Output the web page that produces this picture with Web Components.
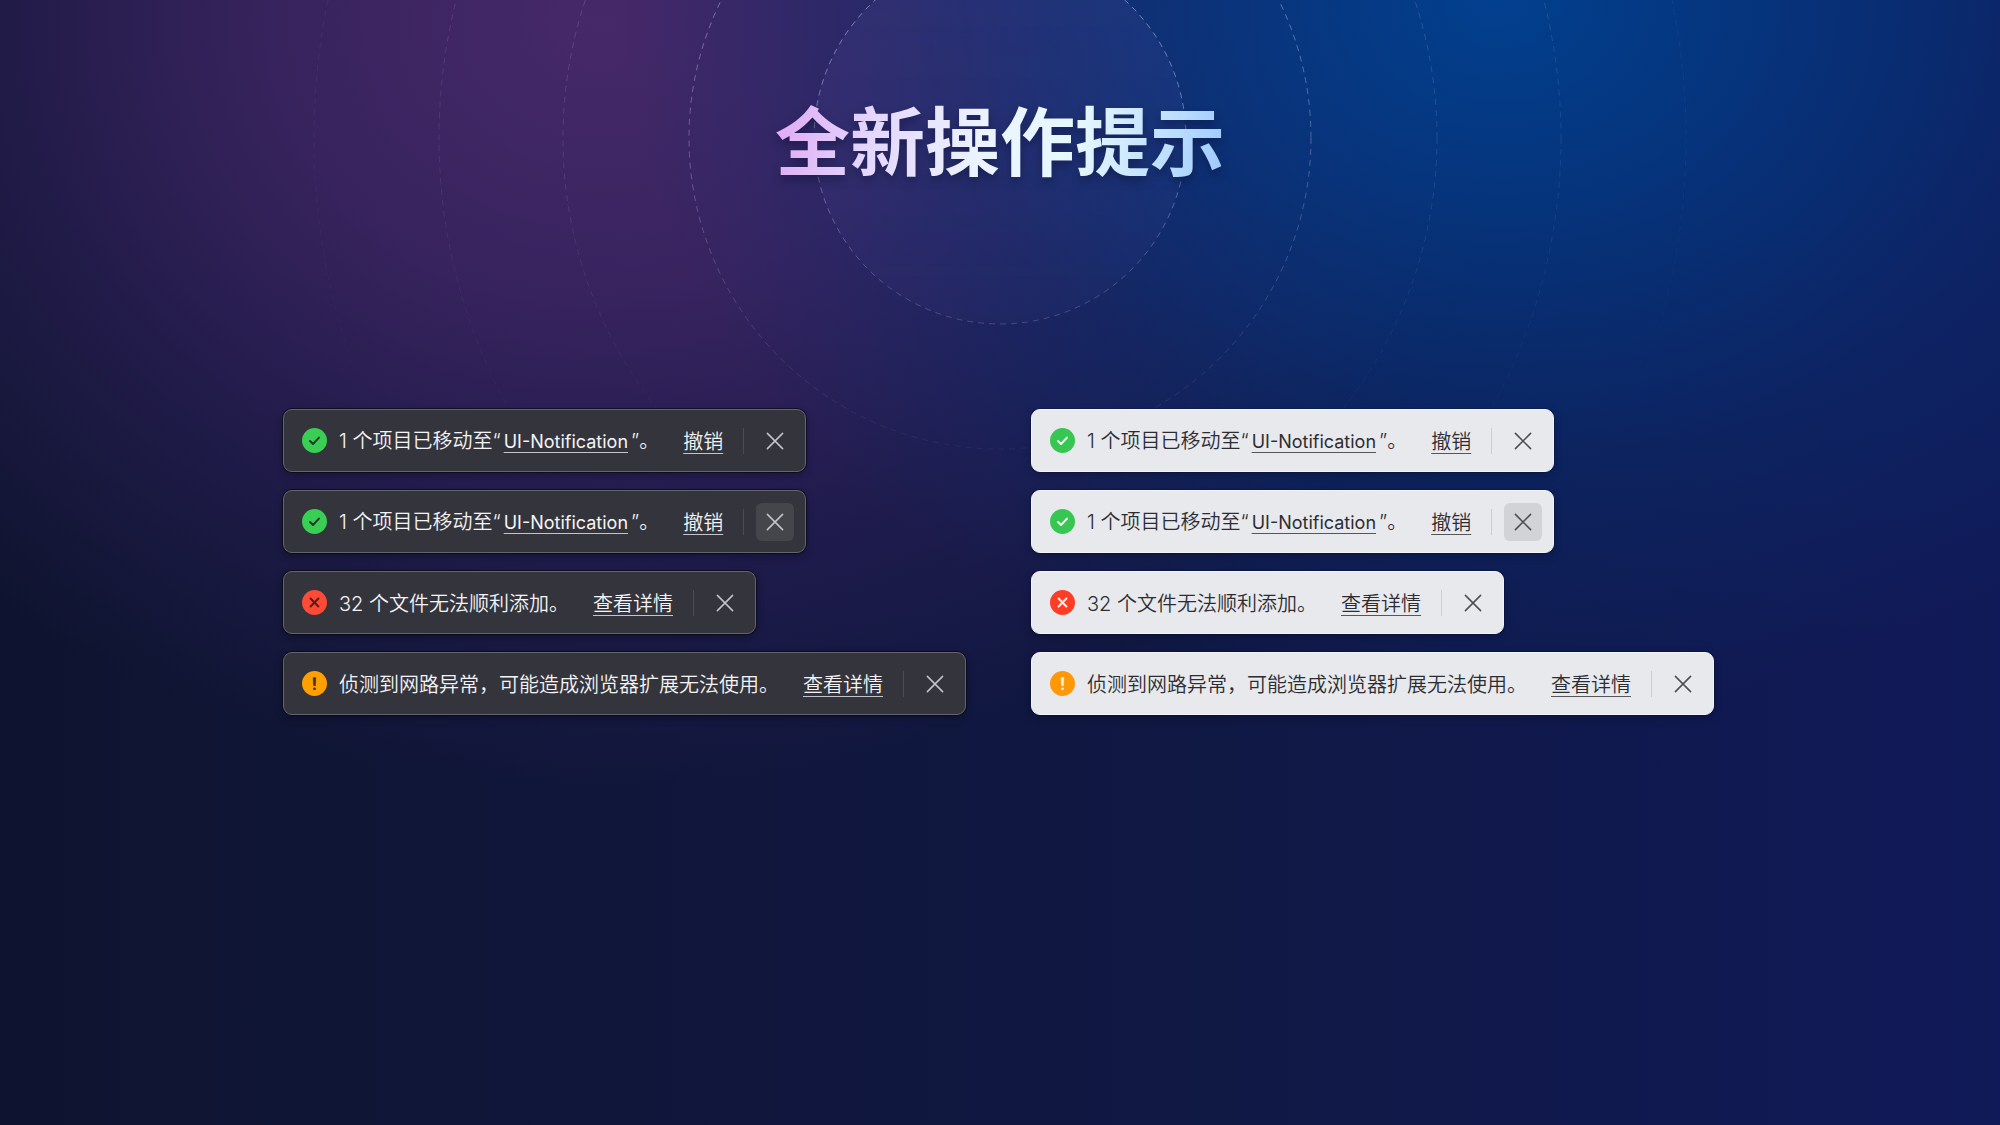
<!DOCTYPE html>
<html lang="zh-CN">
<head>
<meta charset="utf-8">
<meta name="viewport" content="width=device-width, initial-scale=1">
<title>全新操作提示</title>
<style>
  html, body { margin: 0; min-height: 100%; background: #0e1434; }
  body { font-family: Inter, "Noto Sans CJK SC", sans-serif; }
</style>
</head>
<body>

<showcase-stage>
  <showcase-title slot="title">全新操作提示</showcase-title>

  <notice-list theme="dark">
    <notice-bar type="success">1 个项目已移动至“<notice-link>UI-Notification</notice-link>”。<notice-action slot="action">撤销</notice-action></notice-bar>
    <notice-bar type="success" close-hover>1 个项目已移动至“<notice-link>UI-Notification</notice-link>”。<notice-action slot="action">撤销</notice-action></notice-bar>
    <notice-bar type="error">32 个文件无法顺利添加。<notice-action slot="action">查看详情</notice-action></notice-bar>
    <notice-bar type="warning">侦测到网路异常，可能造成浏览器扩展无法使用。<notice-action slot="action">查看详情</notice-action></notice-bar>
  </notice-list>

  <notice-list theme="light">
    <notice-bar type="success">1 个项目已移动至“<notice-link>UI-Notification</notice-link>”。<notice-action slot="action">撤销</notice-action></notice-bar>
    <notice-bar type="success" close-hover>1 个项目已移动至“<notice-link>UI-Notification</notice-link>”。<notice-action slot="action">撤销</notice-action></notice-bar>
    <notice-bar type="error">32 个文件无法顺利添加。<notice-action slot="action">查看详情</notice-action></notice-bar>
    <notice-bar type="warning">侦测到网路异常，可能造成浏览器扩展无法使用。<notice-action slot="action">查看详情</notice-action></notice-bar>
  </notice-list>
</showcase-stage>

<script>
(() => {
  // Small base: every element sets its own styles and markup in the shadow root.
  class BaseElement extends HTMLElement {
    constructor() {
      super();
      const root = this.attachShadow({ mode: 'open' });
      root.innerHTML = '<style>' + this.styles() + '</style>' + this.markup();
    }
    styles() { return ''; }
    markup() { return '<slot></slot>'; }
  }

  /* Background, dashed rings and page layout */
  class ShowcaseStage extends BaseElement {
    styles() {
      return `
        :host {
          display: block;
          position: relative;
          min-height: 100vh;
          overflow: hidden;
          box-sizing: border-box;
          padding: 83px 32px 64px;
          background:
            radial-gradient(ellipse 44% 64% at 75% 0%, rgba(0,68,150,.9) 0%, rgba(2,60,138,.74) 30%, rgba(8,48,118,.42) 65%, rgba(12,36,100,0) 100%),
            radial-gradient(ellipse 46% 68% at 30% 2%, rgba(80,44,114,.84) 0%, rgba(70,40,108,.74) 35%, rgba(52,34,98,.44) 68%, rgba(40,28,90,0) 100%),
            linear-gradient(90deg, #0e142f 0%, #10163a 30%, #101843 58%, #101a58 100%);
        }
        .rings {
          position: absolute;
          inset: 0;
          width: 100%;
          height: 100%;
          pointer-events: none;
          -webkit-mask-image: linear-gradient(#000 0, rgba(0,0,0,.65) 18%, transparent 46%);
          mask-image: linear-gradient(#000 0, rgba(0,0,0,.65) 18%, transparent 46%);
        }
        .rings circle { fill: none; stroke: #d8d4ff; stroke-dasharray: 6 5; }
        .rings circle:last-child { fill: rgba(120,110,200,.1); }
        .content { position: relative; }
        .columns {
          display: grid;
          grid-template-columns: 1fr 1fr;
          gap: 62px;
          max-width: 1434px;
          margin: 216px auto 0;
        }
      `;
    }
    markup() {
      const rings = [[686, .07], [561, .14], [437, .18], [311, .42], [186, .52]]
        .map(([r, o]) => `<circle cx="1000" cy="138" r="${r}" stroke-opacity="${o}"/>`)
        .join('');
      return `
        <svg class="rings" viewBox="0 0 2000 1125" preserveAspectRatio="xMidYMin slice" aria-hidden="true">${rings}</svg>
        <div class="content">
          <slot name="title"></slot>
          <div class="columns"><slot></slot></div>
        </div>
      `;
    }
  }

  class ShowcaseTitle extends BaseElement {
    styles() {
      return `
        :host { display: flex; justify-content: center; }
        h1 {
          margin: 0;
          font: 700 75px/110px "Noto Sans CJK SC", sans-serif;
          color: transparent;
          background: linear-gradient(100deg, #e0aef5 3%, #e4d6fd 22%, #ebf3ff 46%, #e6f8fe 66%, #b9dcff 88%, #9cc8fd 100%);
          -webkit-background-clip: text;
          background-clip: text;
          filter: drop-shadow(0 5px 5px rgba(14,14,50,.45));
        }
      `;
    }
    markup() { return '<h1><slot></slot></h1>'; }
  }

  class NoticeList extends BaseElement {
    styles() {
      return `
        :host {
          display: flex;
          flex-direction: column;
          align-items: flex-start;
          gap: 18px;
          --notice-text: #f4f4f6;
          --notice-line: #c4c4ca;
          --notice-bg: #34353c;
          --notice-border: #65666d;
          --notice-shadow: 0 0 0 1px rgba(4,4,14,.6), 0 3px 8px rgba(0,0,0,.3);
          --notice-divider: #4b4c53;
          --notice-close: #c5c5ca;
          --notice-hover: #45464c;
          --notice-mark: #25382d;
          --notice-mark-error: #5b1d1c;
          --notice-mark-warning: #453219;
          --notice-success: #38cf54;
          --notice-error: #ff4a35;
          --notice-warning: #ffa000;
        }
        :host([theme="light"]) {
          --notice-text: #2c2d32;
          --notice-line: #55565b;
          --notice-bg: #e8e9ed;
          --notice-border: #f2f4f8;
          --notice-shadow: 0 0 0 1px rgba(4,8,40,.25), 0 3px 8px rgba(0,0,20,.25);
          --notice-divider: #cdced3;
          --notice-close: #4b4c52;
          --notice-hover: #d2d3d7;
          --notice-mark: #f2fff4;
          --notice-mark-error: #fff3f0;
          --notice-mark-warning: #fff5dc;
          --notice-success: #38c653;
          --notice-error: #ff3d24;
          --notice-warning: #ff9808;
        }
      `;
    }
  }

  const ICONS = {
    success: '<path d="M8 13l3 3 6-6.4" fill="none" stroke="var(--notice-mark)" stroke-width="2" stroke-linecap="round" stroke-linejoin="round"/>',
    error: '<path d="M8.6 8.6l7.8 7.8M16.4 8.6l-7.8 7.8" fill="none" stroke="var(--notice-mark-error)" stroke-width="2.1" stroke-linecap="round"/>',
    warning: '<path d="M11.1 6.6h2.8l-.4 8.2h-2z" fill="var(--notice-mark-warning)" stroke="var(--notice-mark-warning)" stroke-width=".4" stroke-linejoin="round"/><circle cx="12.5" cy="17.8" r="1.4" fill="var(--notice-mark-warning)"/>',
  };

  class NoticeIcon extends HTMLElement {
    static get observedAttributes() { return ['type']; }

    constructor() {
      super();
      this.attachShadow({ mode: 'open' });
    }

    connectedCallback() { this._render(); }
    attributeChangedCallback() { this._render(); }

    _render() {
      const type = this.getAttribute('type') || 'success';
      this.shadowRoot.innerHTML = `
        <style>
          :host { display: block; flex: none; width: 25px; height: 25px; }
          svg { display: block; }
        </style>
        <svg width="25" height="25" viewBox="0 0 25 25" aria-hidden="true">
          <circle cx="12.5" cy="12.5" r="12.5" fill="var(--notice-${type})"/>
          ${ICONS[type] || ''}
        </svg>
      `;
    }
  }

  /* One notification: icon, message, action, divider, close button */
  class NoticeBar extends BaseElement {
    styles() {
      return `
        :host {
          display: flex;
          align-items: center;
          box-sizing: border-box;
          height: 63px;
          padding: 0 11px 0 18px;
          border: 1px solid var(--notice-border);
          border-radius: 9px;
          background: var(--notice-bg);
          box-shadow: var(--notice-shadow);
          color: var(--notice-text);
          font-size: 20px;
          font-weight: 350;
          line-height: 30px;
          white-space: nowrap;
        }
        .message { margin: 0 24px 0 12px; padding-top: 2px; }
        .divider { width: 1px; height: 26px; margin: 0 12px 0 20px; background: var(--notice-divider); }
        button {
          display: flex;
          align-items: center;
          justify-content: center;
          width: 38px;
          height: 38px;
          padding: 0;
          border: 0;
          border-radius: 6px;
          background: none;
          color: var(--notice-close);
          cursor: pointer;
        }
        button:hover, :host([close-hover]) button { background: var(--notice-hover); }
      `;
    }
    markup() {
      return `
        <notice-icon></notice-icon>
        <span class="message"><slot></slot></span>
        <slot name="action"></slot>
        <span class="divider"></span>
        <button type="button" aria-label="关闭">
          <svg width="18" height="18" viewBox="0 0 18 18" aria-hidden="true">
            <path d="M1.4 1.4l15.2 15.2M16.6 1.4L1.4 16.6" fill="none" stroke="currentColor" stroke-width="1.5" stroke-linecap="round"/>
          </svg>
        </button>
      `;
    }
    connectedCallback() {
      this.shadowRoot.querySelector('notice-icon').setAttribute('type', this.getAttribute('type') || 'success');
      this.shadowRoot.querySelector('button').addEventListener('click', () => this.remove());
    }
  }

  const UNDERLINE = `
    color: inherit;
    text-decoration: underline 1px var(--notice-line);
    text-decoration-skip-ink: none;
    text-underline-offset: 4px;
  `;

  class NoticeLink extends BaseElement {
    styles() { return ':host { display: inline; margin: 0 3px; font-size: 18px; font-weight: 400; } a {' + UNDERLINE + '}'; }
    markup() { return '<a href="#"><slot></slot></a>'; }
  }

  class NoticeAction extends BaseElement {
    styles() {
      return ':host { display: block; padding-top: 2px; } button { display: block; padding: 0; border: 0; background: none; font: inherit; cursor: pointer;' + UNDERLINE + '}';
    }
    markup() { return '<button type="button"><slot></slot></button>'; }
  }

  customElements.define('showcase-stage', ShowcaseStage);
  customElements.define('showcase-title', ShowcaseTitle);
  customElements.define('notice-list', NoticeList);
  customElements.define('notice-icon', NoticeIcon);
  customElements.define('notice-bar', NoticeBar);
  customElements.define('notice-link', NoticeLink);
  customElements.define('notice-action', NoticeAction);
})();
</script>
</body>
</html>
